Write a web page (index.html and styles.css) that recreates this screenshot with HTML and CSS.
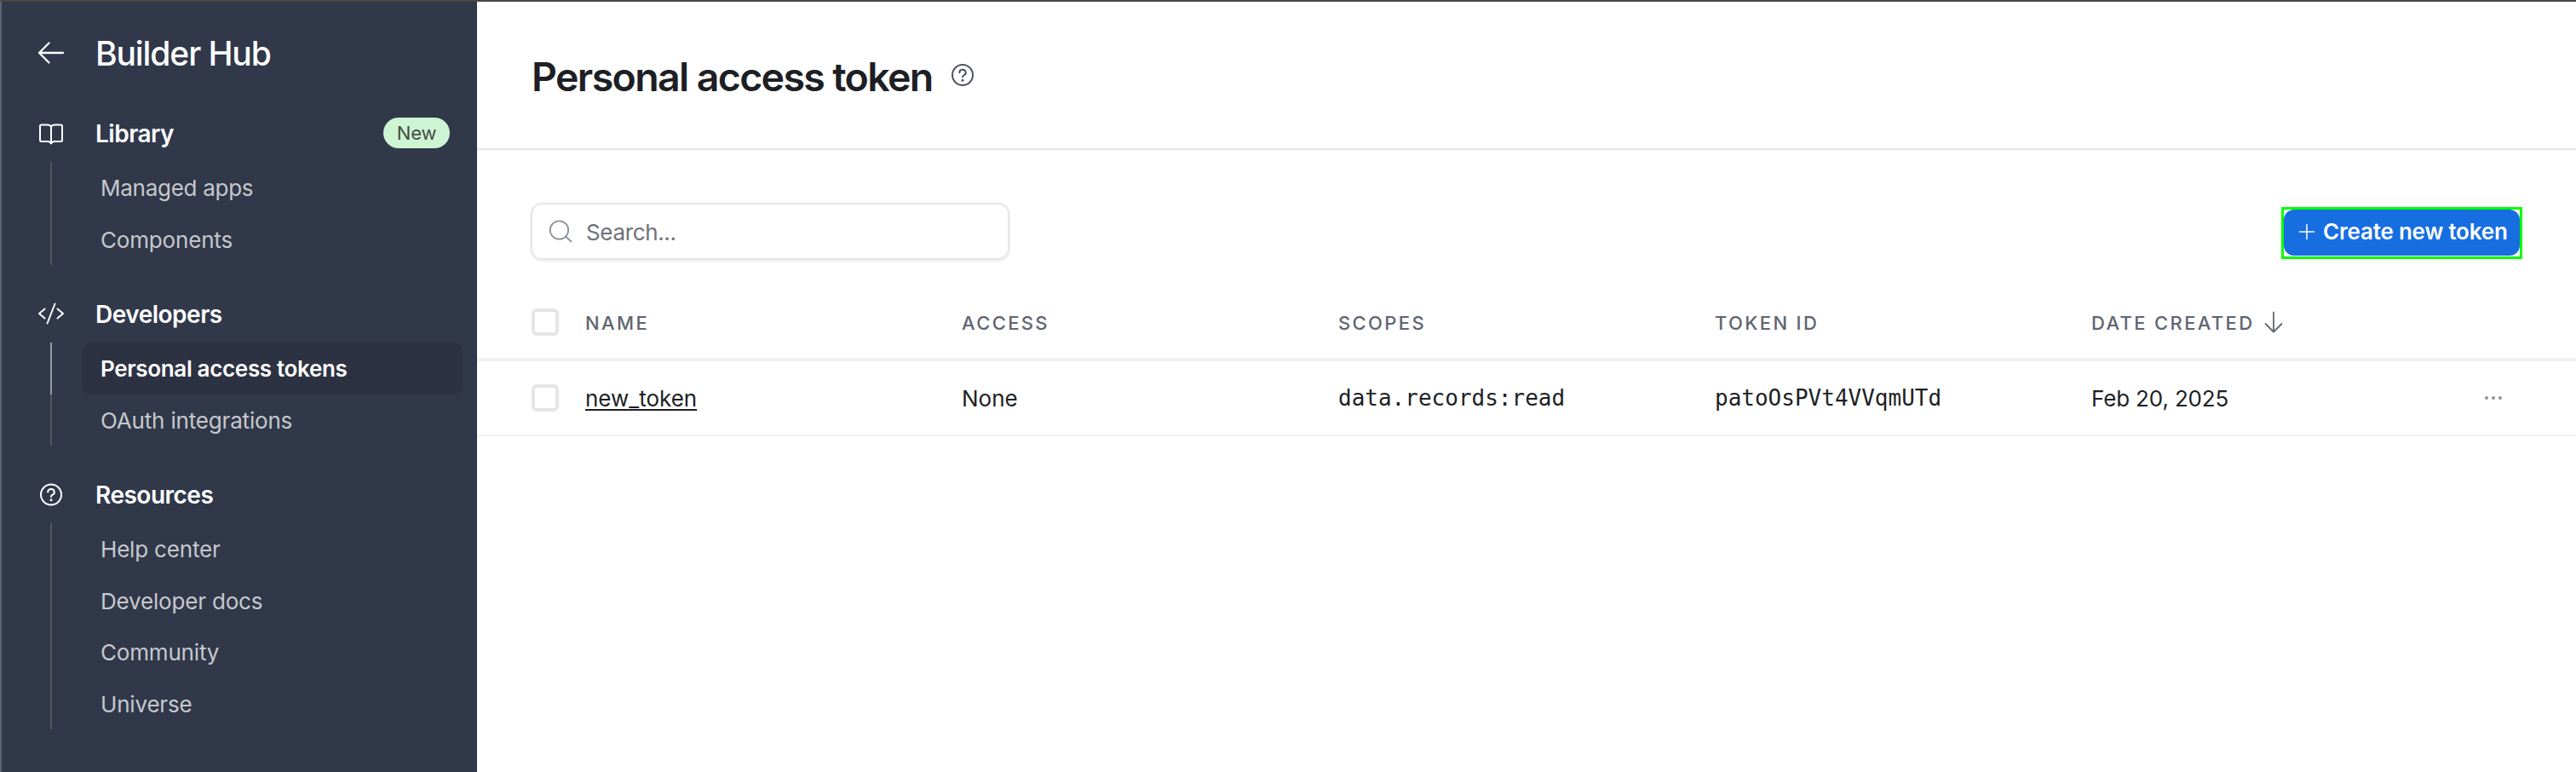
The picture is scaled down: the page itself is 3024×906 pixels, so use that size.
FILE: index.html
```html
<!DOCTYPE html>
<html lang="en">
<head>
<meta charset="utf-8">
<title>Personal access token - Builder Hub</title>
<link rel="stylesheet" href="styles.css">
</head>
<body>
<div class="app">
  <aside class="sidebar">
    <header class="hub">
      <svg class="icon" width="32" height="32" viewBox="0 0 32 32"><path d="M30 16H2M13.500 4.500L2 16l11.500 11.500" stroke-width="2.300"/></svg>
      <span class="hub-title">Builder Hub</span>
    </header>

    <section class="group">
      <div class="group-head">
        <svg class="icon" width="32" height="32" viewBox="0 0 32 32"><path d="M16 8.500C15 7 13.500 6.500 12 6.500H4.500a1.500 1.500 0 0 0-1.500 1.500v16.500a1.500 1.500 0 0 0 1.500 1.500H12c2 0 3.300 1 4 2.500 .7-1.500 2-2.500 4-2.500h7.500a1.500 1.500 0 0 0 1.500-1.500V8a1.500 1.500 0 0 0-1.500-1.500H20c-1.500 0-3 .5-4 2zM16 8.500v20" stroke-width="2"/></svg>
        <span class="group-title">Library</span>
        <span class="pill">New</span>
      </div>
      <ul class="items">
        <li class="item"><a class="link managed">Managed apps</a></li>
        <li class="item"><a class="link">Components</a></li>
      </ul>
    </section>

    <section class="group">
      <div class="group-head">
        <svg class="icon" width="32" height="32" viewBox="0 0 32 32"><path d="M8.500 10.500L2 16l6.500 5.500M23.500 10.500L30 16l-6.500 5.500M20.500 4.500l-9 23" stroke-width="2"/></svg>
        <span class="group-title">Developers</span>
      </div>
      <ul class="items">
        <li class="item active"><a class="link">Personal access tokens</a></li>
        <li class="item"><a class="link">OAuth integrations</a></li>
      </ul>
    </section>

    <section class="group">
      <div class="group-head">
        <svg class="icon" width="32" height="32" viewBox="0 0 32 32"><circle cx="16" cy="16.500" r="12" stroke-width="2"/><path d="M12.200 13.500a3.800 3.500 0 1 1 5.300 3.200c-1.100.5-1.500 1-1.500 2.300" stroke-width="2"/><circle class="dot" cx="16" cy="22.800" r="1.500"/></svg>
        <span class="group-title">Resources</span>
      </div>
      <ul class="items">
        <li class="item"><a class="link">Help center</a></li>
        <li class="item"><a class="link">Developer docs</a></li>
        <li class="item"><a class="link">Community</a></li>
        <li class="item"><a class="link">Universe</a></li>
      </ul>
    </section>
  </aside>

  <main class="main">
    <header class="page-head">
      <h1 class="title">Personal access token</h1>
      <svg class="icon help" width="28" height="28" viewBox="0 0 28 28"><circle cx="14" cy="14" r="12" stroke-width="2"/><path d="M10.300 11.200a3.700 3.400 0 1 1 5.200 3.100c-1.100.5-1.500 1-1.500 2.200" stroke-width="2"/><circle class="dot" cx="14" cy="20.200" r="1.500"/></svg>
    </header>

    <div class="toolbar">
      <label class="search">
        <svg class="icon" width="28" height="28" viewBox="0 0 28 28"><circle cx="12.500" cy="12" r="10.700" stroke-width="1.800"/><path d="M20 19.500l6.500 6" stroke-width="1.800"/></svg>
        <span class="placeholder">Search...</span>
      </label>
      <div class="highlight">
        <button class="create">
          <svg class="icon" width="20" height="20" viewBox="0 0 20 20"><path d="M10 1.500v17M1.500 10h17" stroke-width="1.500"/></svg>
          <span>Create new token</span>
        </button>
      </div>
    </div>

    <div class="table">
      <div class="row head">
        <span class="check"></span>
        <span class="label">NAME</span>
        <span class="label">ACCESS</span>
        <span class="label">SCOPES</span>
        <span class="label">TOKEN ID</span>
        <span class="sorted"><span class="label">DATE CREATED</span>
          <svg class="icon" width="24" height="28" viewBox="0 0 24 28"><path d="M12 2.500v23M2.500 16l9.500 9.500 9.500-9.500" stroke-width="1.800"/></svg>
        </span>
        <span></span>
      </div>
      <div class="row body">
        <span class="check"></span>
        <span class="label"><a class="name">new_token</a></span>
        <span class="label">None</span>
        <span class="mono">data.records:read</span>
        <span class="mono">patoOsPVt4VVqmUTd</span>
        <span class="label date">Feb 20, 2025</span>
        <span class="more"><svg width="22" height="6" viewBox="0 0 22 6"><circle cx="3" cy="3" r="2"/><circle cx="11" cy="3" r="2"/><circle cx="19" cy="3" r="2"/></svg></span>
      </div>
    </div>
  </main>
</div>
</body>
</html>
```
FILE: styles.css
```css
* { box-sizing: border-box; }

body {
  margin: 0;
  font-family: Inter, "Liberation Sans", sans-serif;
  font-size: 26px;
  color: #1d1f25;
  background: #fff;
}

.app {
  display: flex;
  height: 906px;
  border-top: 2px solid #4c4743;
  overflow: hidden;
}

.icon {
  flex: none;
  display: block;
  fill: none;
  stroke: currentColor;
  stroke-linecap: round;
  stroke-linejoin: round;
}
.icon .dot { fill: currentColor; stroke: none; }

/* Sidebar */
.sidebar {
  flex: none;
  width: 560px;
  border-left: 2px solid #59636f;
  background: #30384a;
  color: #fff;
}
.hub, .group-head {
  display: flex;
  align-items: center;
  padding-left: 42px;
  gap: 36px;
}
.hub { height: 120px; }
.hub-title {
  font-size: 39px;
  font-weight: 500;
  letter-spacing: -1.1px;
  line-height: 48px;
  padding-top: 2px;
}
.group { margin-bottom: 23px; }
.group-head { height: 68px; }
.group-title {
  font-size: 28px;
  font-weight: 600;
  letter-spacing: -0.5px;
  padding-top: 2px;
}
.pill {
  margin-left: auto;
  margin-right: 32px;
  width: 78px;
  height: 36px;
  border-radius: 18px;
  background: #cdf5d3;
  color: #464a42;
  font-size: 22px;
  line-height: 36px;
  letter-spacing: -0.2px;
  text-align: center;
}
.items {
  list-style: none;
  margin: 0;
  padding: 0 16px 0 57px;
}
.item {
  height: 60.5px;
  border-left: 2px solid #55565a;
  padding-left: 35px;
  color: #c7c8cc;
}
.link {
  display: block;
  height: 100%;
  padding: 1px 0 0 22px;
  border-radius: 12px;
  line-height: 60.5px;
  letter-spacing: -0.18px;
}
.managed { letter-spacing: -0.27px; }
.active { border-color: #949a9d; color: #fff; }
.active .link {
  background: #2d3243;
  font-weight: 600;
  letter-spacing: -0.33px;
}

/* Page header */
.main { flex: 1; min-width: 0; }
.page-head {
  display: flex;
  align-items: center;
  gap: 21px;
  height: 174px;
  padding-left: 64px;
  border-bottom: 2px solid #e3e4e4;
}
.title {
  margin: 0;
  padding-top: 3px;
  font-size: 46.5px;
  font-weight: 600;
  letter-spacing: -1.65px;
  line-height: 56px;
}
.help { color: #50545e; }

/* Toolbar */
.toolbar {
  display: flex;
  justify-content: space-between;
  align-items: center;
  padding: 62px 63px 0;
}
.search {
  display: flex;
  align-items: center;
  gap: 16px;
  width: 562px;
  height: 67px;
  padding-left: 19px;
  border: 2px solid #e5e6e8;
  border-radius: 13px;
  box-shadow: 0 1px 3px rgba(40, 40, 70, .12);
  color: #8d919a;
}
.placeholder {
  padding-top: 2px;
  color: #6d7279;
  letter-spacing: -0.35px;
}
.highlight {
  border: 3px solid #0f0;
  margin-top: 4px;
}
.create {
  display: flex;
  align-items: center;
  gap: 9px;
  width: 277px;
  height: 54px;
  margin-bottom: 1px;
  padding: 0 0 2px 17px;
  border: 0;
  border-radius: 12px;
  background: #166ee1;
  color: #fff;
  font: 600 26px/32px Inter, "Liberation Sans", sans-serif;
  letter-spacing: -0.2px;
  white-space: nowrap;
}

/* Tokens table */
.table { padding-top: 31px; }
.row {
  display: grid;
  grid-template-columns: 63px repeat(4, 442px) 1fr 108px;
  align-items: center;
  padding-left: 64px;
}
.label { padding-top: 1px; }
.head {
  height: 88px;
  border-bottom: 4px solid #f2f2f2;
  color: #5f6571;
  font-size: 22px;
  font-weight: 500;
  letter-spacing: 2.36px;
}
.body {
  height: 88px;
  border-bottom: 2px solid #f2f2f2;
}
.check {
  width: 32px;
  height: 32px;
  border: 4px solid #e4e5e6;
  border-radius: 6px;
}
.sorted { display: flex; align-items: center; gap: 11px; }
.name {
  text-decoration: underline;
  text-decoration-thickness: 2px;
  text-underline-offset: 3px;
  text-decoration-skip-ink: none;
}
.date { letter-spacing: -0.15px; }
.mono { font-family: "DejaVu Sans Mono", monospace; }
.more { display: flex; fill: #8f939c; }
```
